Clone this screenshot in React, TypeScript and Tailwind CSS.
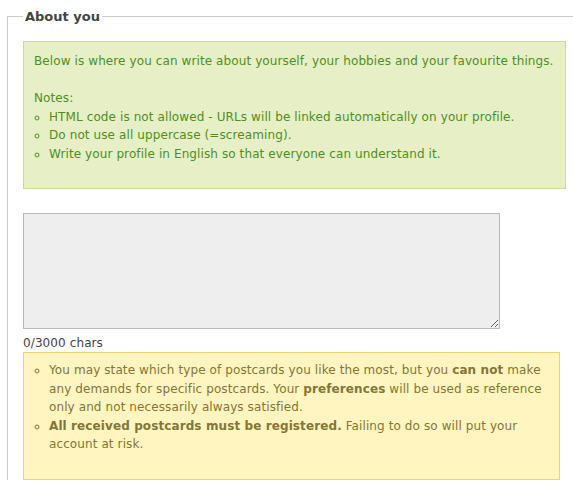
import React from 'react';

export default function App() {
  return (
    <div className="h-[486px] w-[573px] overflow-hidden bg-white text-[12px] leading-[18.5px] tracking-[0.1px] text-[#444] [font-family:'DejaVu_Sans',Verdana,sans-serif]">
      <fieldset className="ml-[7px] mt-[8px] border-l border-t border-[#ccc] pl-[15px] pr-0">
        <legend className="px-[2px] text-[13px] font-bold leading-[17px] tracking-normal text-[#444]">About you</legend>

        <div className="mt-[16px] w-[543px] border border-[#c9da9c] bg-[#e6efc5] px-[10px] pb-[25px] pt-[10px] text-[#4f8f1d]">
          <p>Below is where you can write about yourself, your hobbies and your favourite things.</p>
          <p className="mt-[18.5px]">Notes:</p>
          <ul className="list-[circle] pl-[15px]">
            <li>HTML code is not allowed - URLs will be linked automatically on your profile.</li>
            <li>Do not use all uppercase (=screaming).</li>
            <li>Write your profile in English so that everyone can understand it.</li>
          </ul>
        </div>

        <textarea className="mt-[24px] block h-[116px] w-[477px] border border-[#bbb] bg-[#eee] p-[3px] text-[12px] outline-none" />
        <div className="mt-[4.5px] text-[#444]">0/3000 chars</div>

        <div className="w-[537px] border border-[#f0d46c] bg-[#fff5c0] pb-[25px] pl-[10px] pr-[10px] pt-[8px] text-[#857536]">
          <ul className="list-[circle] pl-[15px]">
            <li>
              You may state which type of postcards you like the most, but you <b>can not</b> make any demands for specific postcards. Your <b>preferences</b> will be used as reference only and not necessarily always satisfied.
            </li>
            <li>
              <b>All received postcards must be registered.</b> Failing to do so will put your account at risk.
            </li>
          </ul>
        </div>
      </fieldset>
    </div>
  );
}
